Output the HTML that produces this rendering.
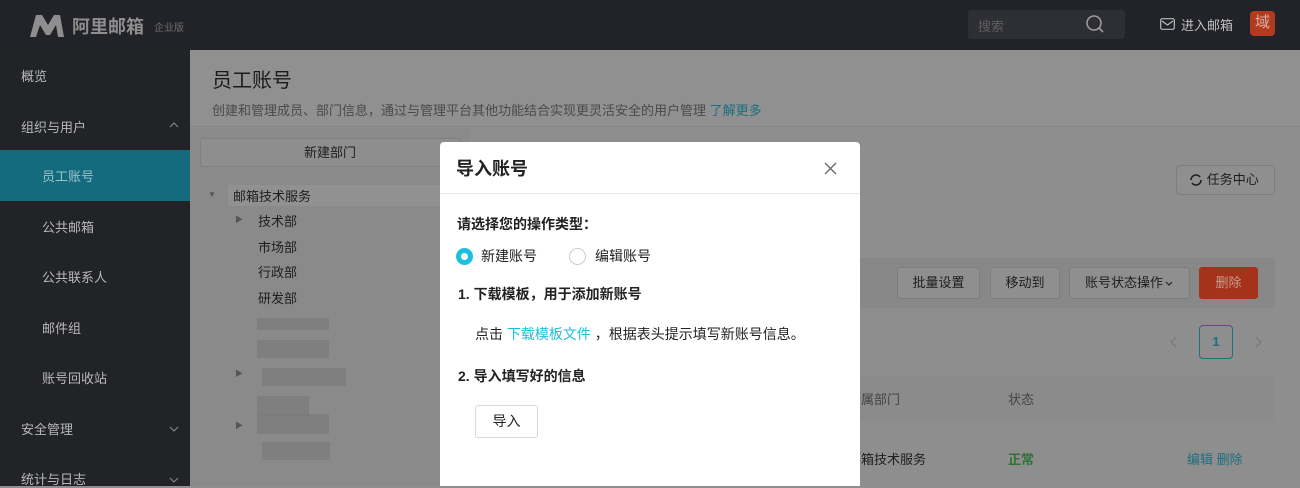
<!DOCTYPE html>
<html><head><meta charset="utf-8"><style>
*{margin:0;padding:0;box-sizing:border-box}
body{width:1300px;height:486px;overflow:hidden;position:relative;background:#8e8e8e;font-family:"Liberation Sans","Noto Sans CJK SC",sans-serif;font-size:13px;color:#1e1e1e}
.a{position:absolute;white-space:nowrap}
#top{left:0;top:0;width:1300px;height:50px;background:#222328}
#side{left:0;top:50px;width:190px;height:436px;background:#222327}
.si{position:absolute;left:21px;color:#b8b8b8;font-size:13px}
.btn{position:absolute;height:32px;border:1px solid #7d7d7d;border-radius:3px;background:#8f8f8f;color:#1e1e1e;text-align:center;line-height:30px;font-size:13px}
.blur{position:absolute;background:#7c7c7c;opacity:.8}
</style></head><body>
<div class="a" id="top"></div>
<svg class="a" style="left:28px;top:13px" width="40" height="26" viewBox="0 0 40 26"><path d="M2 24 L8 2 L14 2 L20 12 L26 2 L32 2 L36 24 L30 24 L28 12 L22 22 L18 22 L12 12 L8 24 Z" fill="#8e8e8e"/></svg>
<div class="a" style="left:72px;top:13px;font-size:18px;color:#8e8e8e;font-weight:bold">阿里邮箱</div>
<div class="a" style="left:154px;top:19px;font-size:10px;color:#6e6e6e">企业版</div>
<div class="a" style="left:968px;top:10px;width:157px;height:29px;background:#2e2f34;border-radius:3px"></div>
<div class="a" style="left:978px;top:16px;font-size:13px;color:#5e5e5e">搜索</div>
<svg class="a" style="left:1085px;top:14px" width="20" height="20" viewBox="0 0 20 20"><circle cx="9" cy="9" r="7" fill="none" stroke="#9a9a9a" stroke-width="1.6"/><path d="M14 14 L18 18" stroke="#9a9a9a" stroke-width="1.6"/></svg>
<svg class="a" style="left:1160px;top:18px" width="15" height="12" viewBox="0 0 15 12"><rect x="0.7" y="0.7" width="13.6" height="10.6" rx="1.5" fill="none" stroke="#bbb" stroke-width="1.2"/><path d="M2 3 L7.5 7 L13 3" fill="none" stroke="#bbb" stroke-width="1.2"/></svg>
<div class="a" style="left:1181px;top:15px;font-size:13px;color:#c0c0c0">进入邮箱</div>
<div class="a" style="left:1250px;top:11px;width:25px;height:25px;background:#b23a1f;border-radius:4px;color:#d9b0a4;font-size:15px;text-align:center;line-height:24px">域</div>

<div class="a" id="side"></div>
<div class="si" style="top:66px">概览</div>
<div class="si" style="top:117px">组织与用户</div>
<svg class="a" style="left:169px;top:122px" width="10" height="6"><path d="M1 5 L5 1 L9 5" fill="none" stroke="#888" stroke-width="1.1"/></svg>
<div class="a" style="left:0;top:150px;width:190px;height:51px;background:#136b7d"></div>
<div class="si" style="top:166px;left:42px;color:#9bc2cb">员工账号</div>
<div class="si" style="top:217px;left:42px">公共邮箱</div>
<div class="si" style="top:267px;left:42px">公共联系人</div>
<div class="si" style="top:318px;left:42px">邮件组</div>
<div class="si" style="top:368px;left:42px">账号回收站</div>
<div class="si" style="top:419px">安全管理</div>
<svg class="a" style="left:169px;top:426px" width="10" height="6"><path d="M1 1 L5 5 L9 1" fill="none" stroke="#888" stroke-width="1.1"/></svg>
<div class="si" style="top:469px">统计与日志</div>
<svg class="a" style="left:169px;top:477px" width="10" height="6"><path d="M1 1 L5 5 L9 1" fill="none" stroke="#888" stroke-width="1.1"/></svg>

<div class="a" style="left:190px;top:50px;width:1110px;height:77px;background:#909090;border-bottom:1px solid #858585"></div>
<div class="a" style="left:212px;top:64px;font-size:20px;color:#1c1c1c">员工账号</div>
<div class="a" style="left:212px;top:100px;font-size:13px;color:#4a4a4a">创建和管理成员、部门信息，通过与管理平台其他功能结合实现更灵活安全的用户管理 <span style="color:#1a6f82">了解更多</span></div>
<div class="a" style="left:190px;top:128px;width:280px;height:358px;background:#8a8a8b"></div>
<div class="btn" style="left:200px;top:138px;width:260px;height:29px;line-height:27px;background:#8e8e8e;border-color:#808080">新建部门</div>
<div class="a" style="left:208px;top:190px;font-size:8px;color:#555">▼</div>
<div class="a" style="left:228px;top:185px;width:240px;height:21px;background:#919191"></div>
<div class="a" style="left:233px;top:186px;color:#1e1e1e">邮箱技术服务</div>
<div class="a" style="left:235px;top:214px;font-size:8px;color:#555">▶</div>
<div class="a" style="left:258px;top:211px">技术部</div>
<div class="a" style="left:258px;top:237px">市场部</div>
<div class="a" style="left:258px;top:262px">行政部</div>
<div class="a" style="left:258px;top:288px">研发部</div>
<div class="blur" style="left:257px;top:318px;width:72px;height:12px"></div>
<div class="blur" style="left:257px;top:340px;width:72px;height:18px"></div>
<div class="a" style="left:235px;top:368px;font-size:8px;color:#555">▶</div>
<div class="blur" style="left:262px;top:368px;width:84px;height:18px"></div>
<div class="blur" style="left:257px;top:396px;width:52px;height:20px"></div>
<div class="a" style="left:235px;top:420px;font-size:8px;color:#555">▶</div>
<div class="blur" style="left:257px;top:414px;width:72px;height:20px"></div>
<div class="blur" style="left:262px;top:442px;width:68px;height:18px"></div>

<div class="btn" style="left:1176px;top:165px;width:99px;height:30px;line-height:28px;border-radius:4px">&nbsp;&nbsp;&nbsp;&nbsp;任务中心</div>
<svg class="a" style="left:1189px;top:173px" width="14" height="14" viewBox="0 0 14 14"><path d="M12 7 A5 5 0 0 1 3 10 M2 7 A5 5 0 0 1 11 4" fill="none" stroke="#1e1e1e" stroke-width="1.6"/></svg>
<div class="a" style="left:470px;top:258px;width:805px;height:50px;background:#888889"></div>
<div class="btn" style="left:897px;top:267px;width:83px">批量设置</div>
<div class="btn" style="left:990px;top:267px;width:70px">移动到</div>
<div class="btn" style="left:1069px;top:267px;width:121px;text-align:left;padding-left:15px">账号状态操作</div>
<svg class="a" style="left:1165px;top:281px" width="8" height="5"><path d="M1 1 L4 4 L7 1" fill="none" stroke="#1e1e1e" stroke-width="1.1"/></svg>
<div class="btn" style="left:1199px;top:267px;width:59px;background:#a5331c;border-color:#a5331c;color:#c99a8c">删除</div>
<svg class="a" style="left:1170px;top:336px" width="7" height="12"><path d="M6 1 L1 6 L6 11" fill="none" stroke="#777" stroke-width="1.1"/></svg>
<div class="a" style="left:1199px;top:325px;width:34px;height:34px;border:1px solid #1c6f80;border-radius:4px;color:#1c6f80;text-align:center;line-height:32px;font-weight:bold">1</div>
<svg class="a" style="left:1255px;top:336px" width="7" height="12"><path d="M1 1 L6 6 L1 11" fill="none" stroke="#777" stroke-width="1.1"/></svg>
<div class="a" style="left:470px;top:375px;width:805px;height:46px;background:#8b8b8b"></div>
<div class="a" style="left:848px;top:389px;color:#444">所属部门</div>
<div class="a" style="left:1008px;top:389px;color:#444">状态</div>
<div class="a" style="left:848px;top:449px">邮箱技术服务</div>
<div class="a" style="left:1008px;top:449px;color:#2f7232;font-weight:bold">正常</div>
<div class="a" style="left:1187px;top:449px;color:#1c6f80">编辑 删除</div>

<div class="a" style="left:440px;top:142px;width:420px;height:344px;background:#fff;border-radius:4px 4px 0 0"></div>
<div class="a" style="left:440px;top:193px;width:420px;height:1px;background:#e8e8e8"></div>
<div class="a" style="left:456px;top:155px;font-size:18px;color:#222;font-weight:bold">导入账号</div>
<svg class="a" style="left:824px;top:162px" width="13" height="13"><path d="M1 1 L12 12 M12 1 L1 12" stroke="#666" stroke-width="1.3"/></svg>
<div class="a" style="left:457px;top:214px;font-size:14px;font-weight:bold;color:#222">请选择您的操作类型：</div>
<div class="a" style="left:456px;top:248px;width:17px;height:17px;border-radius:50%;background:#1ebfdc"></div>
<div class="a" style="left:461px;top:253px;width:7px;height:7px;border-radius:50%;background:#fff"></div>
<div class="a" style="left:481px;top:246px;font-size:14px;color:#222">新建账号</div>
<div class="a" style="left:569px;top:248px;width:17px;height:17px;border-radius:50%;border:1px solid #ccc"></div>
<div class="a" style="left:595px;top:246px;font-size:14px;color:#222">编辑账号</div>
<div class="a" style="left:458px;top:284px;font-size:14px;font-weight:bold;color:#222">1. 下载模板，用于添加新账号</div>
<div class="a" style="left:475px;top:324px;font-size:14px;color:#222">点击 <span style="color:#1ebfdc">下载模板文件</span> ，根据表头提示填写新账号信息。</div>
<div class="a" style="left:458px;top:366px;font-size:14px;font-weight:bold;color:#222">2. 导入填写好的信息</div>
<div class="a" style="left:475px;top:405px;width:63px;height:33px;border:1px solid #d9d9d9;border-radius:3px;text-align:center;line-height:31px;font-size:14px;color:#222">导入</div>
</body></html>
